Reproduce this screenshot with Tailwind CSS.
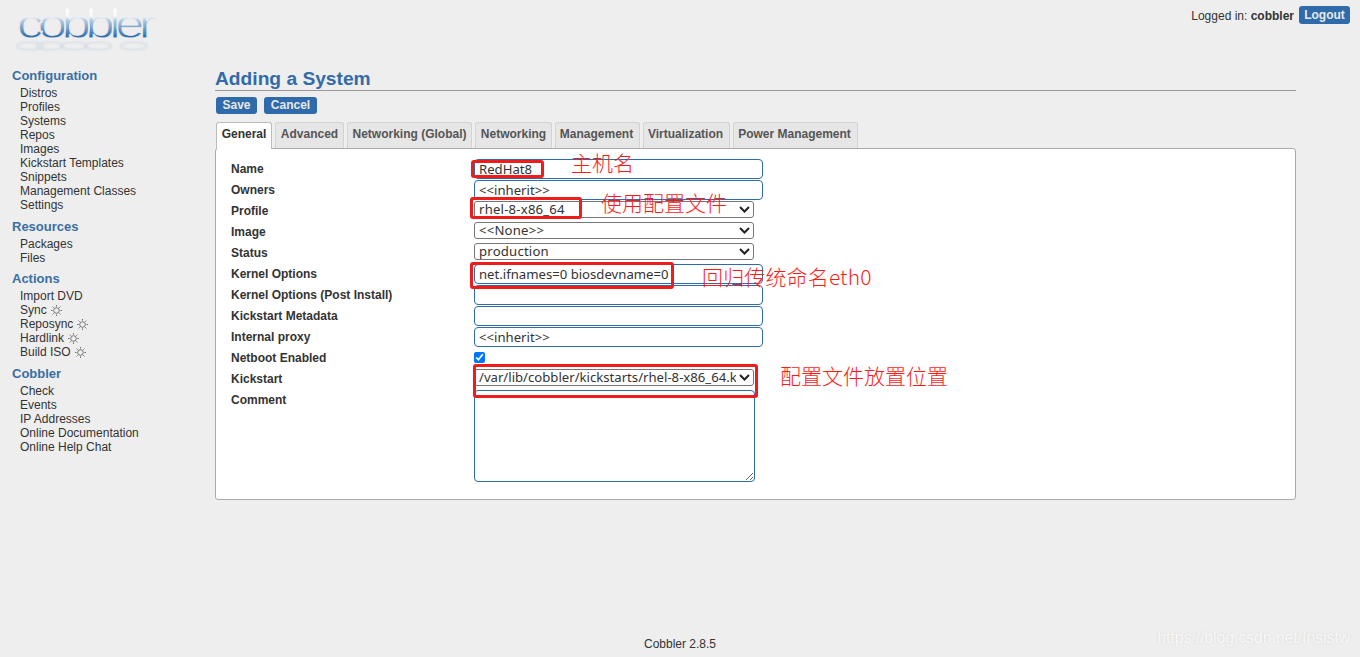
<!DOCTYPE html>
<html lang="en">
<head>
  <meta charset="UTF-8" />
  <title>Cobbler</title>
  <script src="https://cdn.jsdelivr.net/npm/@tailwindcss/browser@4"></script>
</head>
<body class="relative h-[657px] overflow-hidden bg-[#eeeeee] text-[#333333] text-[12px] leading-[14px] font-['Liberation_Sans',Arial,sans-serif] flex flex-col">

  <!-- header -->
  <header class="h-[67px] shrink-0 flex justify-between pl-[14px] pr-[10px]">
    <svg width="145" height="58" viewBox="0 0 145 58">
      <defs>
        <linearGradient id="logoFill" gradientUnits="userSpaceOnUse" x1="0" y1="7" x2="0" y2="38">
          <stop offset="0" stop-color="#ffffff" />
          <stop offset="0.3" stop-color="#f6f9fc" />
          <stop offset="0.42" stop-color="#b7cde3" />
          <stop offset="1" stop-color="#2565a8" />
        </linearGradient>
        <filter id="soft"><feGaussianBlur stdDeviation="0.8" /></filter>
      </defs>
      <text transform="scale(1.35 1)" x="2" y="38" font-family="Liberation Sans" font-size="40" letter-spacing="-4.6" fill="url(#logoFill)" stroke="#eeeeee" stroke-width="0.9" paint-order="fill">cobbler</text>
      <g fill="none" stroke="#d2dce7" stroke-width="1.6" filter="url(#soft)">
        <ellipse cx="16" cy="46" rx="13" ry="4" />
        <ellipse cx="36" cy="46" rx="13" ry="4" />
        <ellipse cx="60" cy="46" rx="13" ry="4" />
        <ellipse cx="84" cy="46" rx="13" ry="4" />
        <ellipse cx="120" cy="46" rx="13" ry="4" />
      </g>
    </svg>
    <div class="flex items-start gap-[5px] pt-[6px]">
      <span class="pt-[3px]">Logged in: <b>cobbler</b></span>
      <a class="flex h-[18px] w-[51px] items-center justify-center rounded-[3px] bg-[#2f6bab] font-bold text-[#e8e8e8]">Logout</a>
    </div>
  </header>

  <div class="flex flex-1">
    <!-- sidebar -->
    <nav class="w-[215px] shrink-0 pl-[12px] pt-[1px]">
      <h3 class="text-[13px] font-bold leading-[16px] text-[#3a6ea5] mb-[2px]">Configuration</h3>
      <ul class="pl-[8px] mb-[7px]">
        <li>Distros</li><li>Profiles</li><li>Systems</li><li>Repos</li><li>Images</li>
        <li>Kickstart Templates</li><li>Snippets</li><li>Management Classes</li><li>Settings</li>
      </ul>
      <h3 class="text-[13px] font-bold leading-[16px] text-[#3a6ea5] mb-[2px]">Resources</h3>
      <ul class="pl-[8px] mb-[6px]">
        <li>Packages</li><li>Files</li>
      </ul>
      <h3 class="text-[13px] font-bold leading-[16px] text-[#3a6ea5] mb-[2px]">Actions</h3>
      <ul class="pl-[8px] mb-[7px]">
        <li>Import DVD</li>
        <li class="flex items-center gap-[4px]">Sync <svg width="11" height="11" viewBox="0 0 11 11" fill="none" stroke="#555555" stroke-width="0.8"><circle cx="5.5" cy="5.5" r="2.8" /><path d="M5.5 0v1.6M5.5 9.4V11M0 5.5h1.6M9.4 5.5H11M1.6 1.6l1.1 1.1M8.3 8.3l1.1 1.1M1.6 9.4l1.1-1.1M8.3 2.7l1.1-1.1" /></svg></li>
        <li class="flex items-center gap-[4px]">Reposync <svg width="11" height="11" viewBox="0 0 11 11" fill="none" stroke="#555555" stroke-width="0.8"><circle cx="5.5" cy="5.5" r="2.8" /><path d="M5.5 0v1.6M5.5 9.4V11M0 5.5h1.6M9.4 5.5H11M1.6 1.6l1.1 1.1M8.3 8.3l1.1 1.1M1.6 9.4l1.1-1.1M8.3 2.7l1.1-1.1" /></svg></li>
        <li class="flex items-center gap-[4px]">Hardlink <svg width="11" height="11" viewBox="0 0 11 11" fill="none" stroke="#555555" stroke-width="0.8"><circle cx="5.5" cy="5.5" r="2.8" /><path d="M5.5 0v1.6M5.5 9.4V11M0 5.5h1.6M9.4 5.5H11M1.6 1.6l1.1 1.1M8.3 8.3l1.1 1.1M1.6 9.4l1.1-1.1M8.3 2.7l1.1-1.1" /></svg></li>
        <li class="flex items-center gap-[4px]">Build ISO <svg width="11" height="11" viewBox="0 0 11 11" fill="none" stroke="#555555" stroke-width="0.8"><circle cx="5.5" cy="5.5" r="2.8" /><path d="M5.5 0v1.6M5.5 9.4V11M0 5.5h1.6M9.4 5.5H11M1.6 1.6l1.1 1.1M8.3 8.3l1.1 1.1M1.6 9.4l1.1-1.1M8.3 2.7l1.1-1.1" /></svg></li>
      </ul>
      <h3 class="text-[13px] font-bold leading-[16px] text-[#3a6ea5] mb-[2px]">Cobbler</h3>
      <ul class="pl-[8px]">
        <li>Check</li><li>Events</li><li>IP Addresses</li><li>Online Documentation</li><li>Online Help Chat</li>
      </ul>
    </nav>

    <!-- main -->
    <main class="w-[1081px]">
      <h1 class="text-[19.2px] font-bold leading-[23px] text-[#336ba8] border-b border-[#999999]">Adding a System</h1>
      <div class="flex gap-[7px] pl-[1px] mt-[6px]">
        <button class="h-[17px] w-[41px] rounded-[3px] bg-[#2f6bab] pb-[2px] font-bold text-[#e8e8e8]">Save</button>
        <button class="h-[17px] w-[53px] rounded-[3px] bg-[#2f6bab] pb-[2px] font-bold text-[#e8e8e8]">Cancel</button>
      </div>

      <!-- tabs -->
      <div class="flex gap-[3px] pl-[1px] mt-[8px] h-[26px] relative z-10 font-bold text-[#555555]">
        <div class="w-[56px] h-[27px] pb-[4px] flex items-center justify-center rounded-t-[3px] border border-b-0 border-[#bbbbbb] bg-white text-[#333333]">General</div>
        <div class="w-[69px] pb-[3px] flex items-center justify-center rounded-t-[3px] border border-b-0 border-[#d3d3d3] bg-[#e6e6e6]">Advanced</div>
        <div class="w-[125px] pb-[3px] flex items-center justify-center rounded-t-[3px] border border-b-0 border-[#d3d3d3] bg-[#e6e6e6]">Networking (Global)</div>
        <div class="w-[77px] pb-[3px] flex items-center justify-center rounded-t-[3px] border border-b-0 border-[#d3d3d3] bg-[#e6e6e6]">Networking</div>
        <div class="w-[85px] pb-[3px] pr-[2px] flex items-center justify-center rounded-t-[3px] border border-b-0 border-[#d3d3d3] bg-[#e6e6e6]">Management</div>
        <div class="w-[87px] pb-[3px] pr-[2px] flex items-center justify-center rounded-t-[3px] border border-b-0 border-[#d3d3d3] bg-[#e6e6e6]">Virtualization</div>
        <div class="w-[125px] pb-[3px] pr-[2px] flex items-center justify-center rounded-t-[3px] border border-b-0 border-[#d3d3d3] bg-[#e6e6e6]">Power Management</div>
      </div>

      <!-- form panel -->
      <form class="relative h-[352px] rounded-[3px] border border-[#aaaaaa] bg-white pl-[15px] pt-[10px] font-['Noto_Sans',sans-serif] text-[13.15px] text-[#333333]">
        <div class="grid grid-cols-[243px_auto] auto-rows-[21px] justify-start items-start">
          <label class="pt-[3px] font-['Liberation_Sans',sans-serif] text-[12px] font-bold">Name</label>
          <input value="RedHat8" class="h-[20px] w-[289px] rounded-[4px] border border-[#2f6bab] px-[4px]" />
          <label class="pt-[3px] font-['Liberation_Sans',sans-serif] text-[12px] font-bold">Owners</label>
          <input value="&lt;&lt;inherit&gt;&gt;" class="h-[20px] w-[289px] rounded-[4px] border border-[#2f6bab] px-[4px]" />
          <label class="pt-[3px] font-['Liberation_Sans',sans-serif] text-[12px] font-bold">Profile</label>
          <div class="relative h-[17px] w-[280px]">
            <select class="h-full w-full appearance-none rounded-[3px] border border-[#767676] bg-white pl-[4px] pr-[17px] leading-[15px] tracking-[0.2px]"><option>rhel-8-x86_64</option></select>
            <svg class="absolute right-[4px] top-[5px] pointer-events-none" width="11" height="7" viewBox="0 0 11 7" fill="none" stroke="#222222" stroke-width="2"><path d="M1 1l4.5 4.5L10 1" /></svg>
          </div>
          <label class="pt-[3px] font-['Liberation_Sans',sans-serif] text-[12px] font-bold">Image</label>
          <div class="relative h-[17px] w-[280px]">
            <select class="h-full w-full appearance-none rounded-[3px] border border-[#767676] bg-white pl-[4px] pr-[17px] leading-[15px] tracking-[0.2px]"><option>&lt;&lt;None&gt;&gt;</option></select>
            <svg class="absolute right-[4px] top-[5px] pointer-events-none" width="11" height="7" viewBox="0 0 11 7" fill="none" stroke="#222222" stroke-width="2"><path d="M1 1l4.5 4.5L10 1" /></svg>
          </div>
          <label class="pt-[3px] font-['Liberation_Sans',sans-serif] text-[12px] font-bold">Status</label>
          <div class="relative h-[17px] w-[280px]">
            <select class="h-full w-full appearance-none rounded-[3px] border border-[#767676] bg-white pl-[4px] pr-[17px] leading-[15px] tracking-[0.2px]"><option>production</option></select>
            <svg class="absolute right-[4px] top-[5px] pointer-events-none" width="11" height="7" viewBox="0 0 11 7" fill="none" stroke="#222222" stroke-width="2"><path d="M1 1l4.5 4.5L10 1" /></svg>
          </div>
          <label class="pt-[3px] font-['Liberation_Sans',sans-serif] text-[12px] font-bold">Kernel Options</label>
          <input value="net.ifnames=0 biosdevname=0" class="h-[20px] w-[289px] rounded-[4px] border border-[#2f6bab] px-[4px]" />
          <label class="pt-[3px] font-['Liberation_Sans',sans-serif] text-[12px] font-bold">Kernel Options (Post Install)</label>
          <input class="h-[20px] w-[289px] rounded-[4px] border border-[#2f6bab] px-[4px]" />
          <label class="pt-[3px] font-['Liberation_Sans',sans-serif] text-[12px] font-bold">Kickstart Metadata</label>
          <input class="h-[20px] w-[289px] rounded-[4px] border border-[#2f6bab] px-[4px]" />
          <label class="pt-[3px] font-['Liberation_Sans',sans-serif] text-[12px] font-bold">Internal proxy</label>
          <input value="&lt;&lt;inherit&gt;&gt;" class="h-[20px] w-[289px] rounded-[4px] border border-[#2f6bab] px-[4px]" />
          <label class="pt-[3px] font-['Liberation_Sans',sans-serif] text-[12px] font-bold">Netboot Enabled</label>
          <input type="checkbox" checked class="mt-[4px] h-[11px] w-[11px] accent-[#0075ff]" />
          <label class="pt-[3px] font-['Liberation_Sans',sans-serif] text-[12px] font-bold">Kickstart</label>
          <div class="relative h-[17px] w-[280px]">
            <select class="h-full w-full appearance-none rounded-[3px] border border-[#767676] bg-white pl-[4px] pr-[17px] leading-[15px]"><option>/var/lib/cobbler/kickstarts/rhel-8-x86_64.ks</option></select>
            <svg class="absolute right-[4px] top-[5px] pointer-events-none" width="11" height="7" viewBox="0 0 11 7" fill="none" stroke="#222222" stroke-width="2"><path d="M1 1l4.5 4.5L10 1" /></svg>
          </div>
          <label class="pt-[3px] font-['Liberation_Sans',sans-serif] text-[12px] font-bold">Comment</label>
          <textarea class="h-[92px] w-[281px] rounded-[4px] border border-[#2f6bab]"></textarea>
        </div>

        <!-- red annotations drawn over the form -->
        <div class="absolute left-[255px] top-[11px] h-[18px] w-[73px] rounded-[3px] border-[3px] border-[#f01c1c]"></div>
        <div class="absolute left-[254px] top-[48px] h-[22px] w-[112px] rounded-[3px] border-[3px] border-[#f01c1c]"></div>
        <div class="absolute left-[254px] top-[113px] h-[27px] w-[204px] rounded-[3px] border-[3px] border-[#f01c1c]"></div>
        <div class="absolute left-[257px] top-[215px] h-[34px] w-[285px] rounded-[3px] border-[3px] border-[#f01c1c]"></div>
        <div class="absolute left-[355px] top-[-1px] font-['Noto_Sans_CJK_SC',sans-serif] text-[21px] font-light leading-[28px] text-[#ff1a1a]">主机名</div>
        <div class="absolute left-[385px] top-[39px] font-['Noto_Sans_CJK_SC',sans-serif] text-[21px] font-light leading-[28px] text-[#ff1a1a]">使用配置文件</div>
        <div class="absolute left-[486px] top-[113px] font-['Noto_Sans_CJK_SC',sans-serif] text-[21px] font-light leading-[28px] tracking-[0.15px] text-[#ff1a1a]">回归传统命名eth0</div>
        <div class="absolute left-[564px] top-[212px] font-['Noto_Sans_CJK_SC',sans-serif] text-[21px] font-light leading-[28px] text-[#ff1a1a]">配置文件放置位置</div>
      </form>
    </main>
  </div>

  <footer class="h-[20px] shrink-0 text-center">Cobbler 2.8.5</footer>
  <div class="absolute right-[10px] bottom-[10px] text-[15.7px] leading-[18px] text-[#f8f8f8] [text-shadow:0_0_2px_#d5d5d5]">https://blog.csdn.net/Insistw</div>
</body>
</html>
